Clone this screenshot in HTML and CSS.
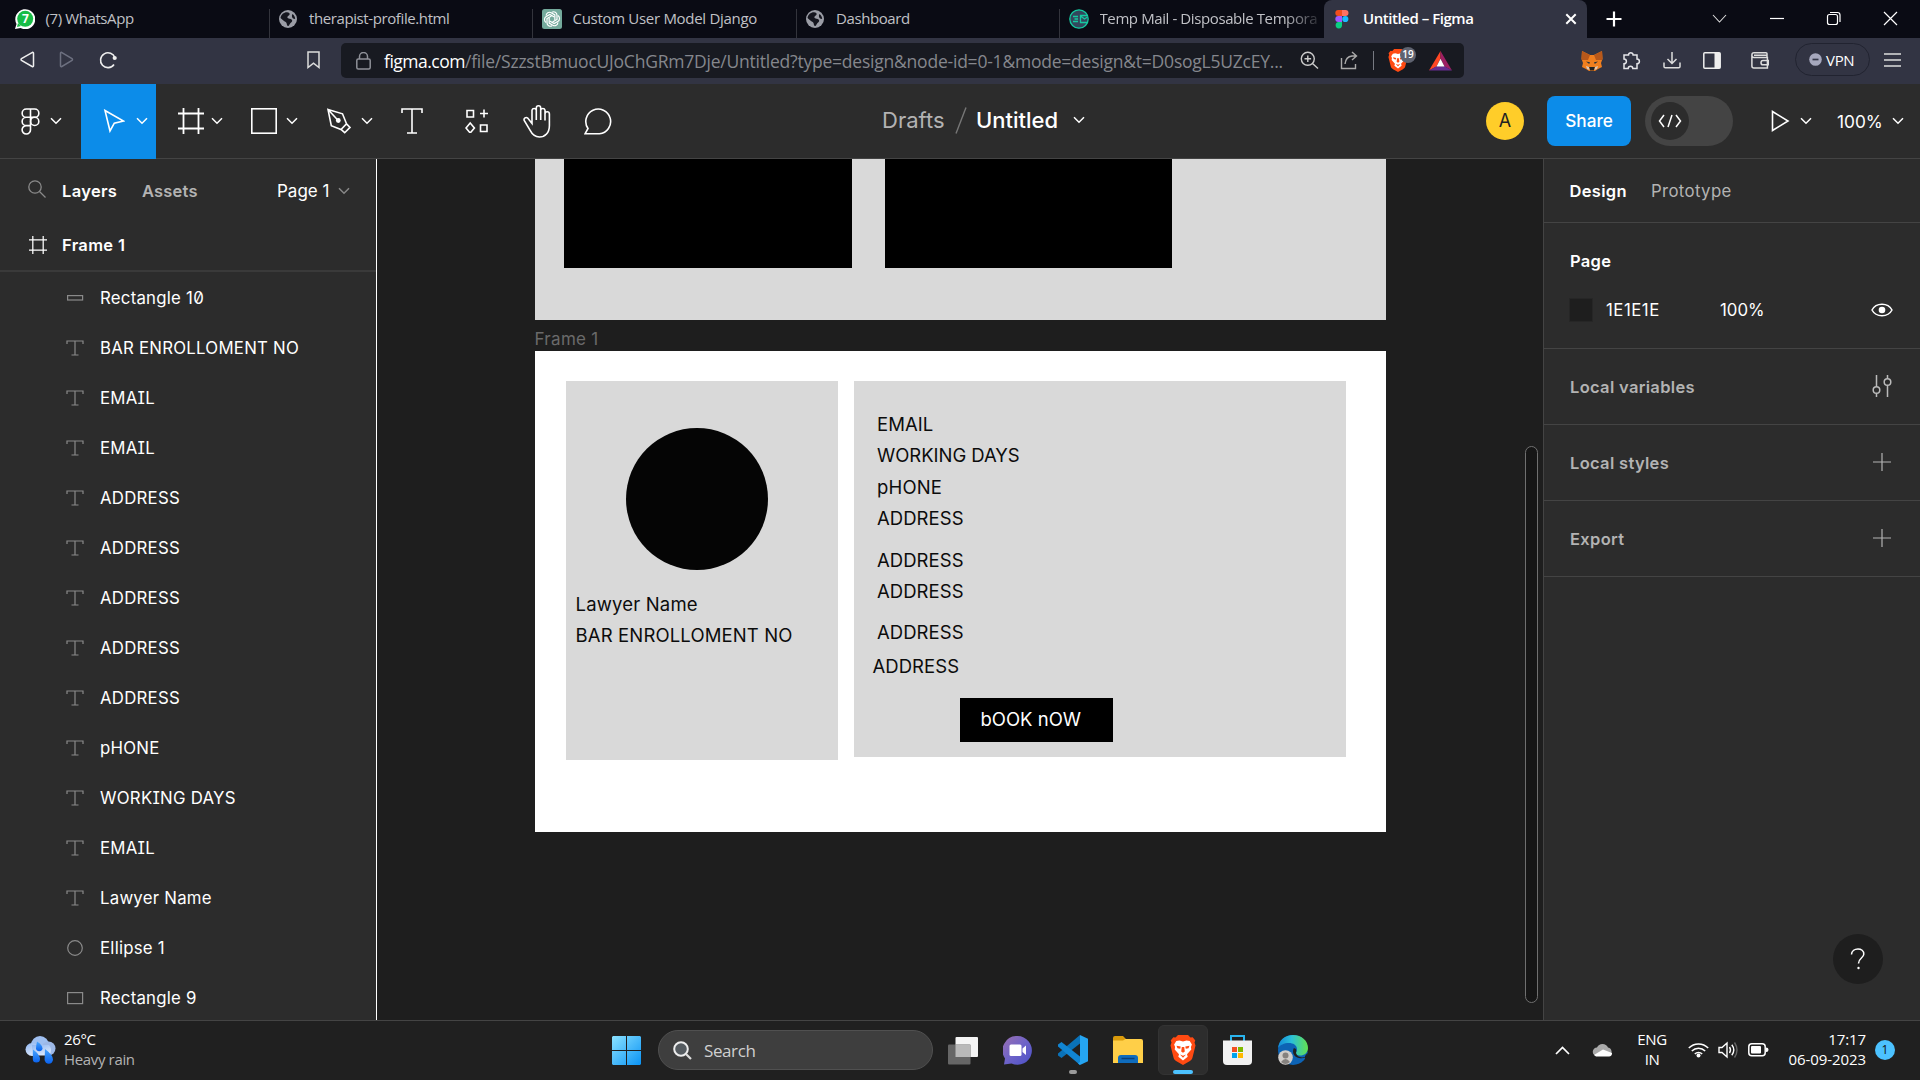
FILE: index.html
```html
<!DOCTYPE html>
<html lang="en">
<head>
<meta charset="utf-8">
<title>Untitled – Figma</title>
<link rel="stylesheet" href="styles.css">
</head>
<body>
<svg class="defs" width="0" height="0">
  <defs>
    <symbol id="chev" viewBox="0 0 12 8"><path d="M1 1.2l5 5 5-5" fill="none" stroke="currentColor" stroke-width="1.5"/></symbol>
    <symbol id="globe" viewBox="0 0 20 20"><circle cx="10" cy="10" r="9" fill="#9b9da6"/><path d="M9 3.2c2 .3 3 1 2.600 2.400-.5 1.400-2 1.200-2.200 2.600-.2 1.300 2.400 1.300 3.800 2 1.700.9 1 2.600-.4 3.600-1 .8-1.200 2.200-2.400 3.200-1.600.2-1.400-1.600-1.800-2.800-.5-1.300-2-1.600-3.200-2.600C4.200 10.500 3 9.600 2.500 8.700 3.100 5.600 5.800 3.100 9 3.200zM14.500 5c1.700 1.300 2.600 2.800 2.700 4.800-1.200.3-2.600-.3-3-1.500-.4-1.300-.4-2.300.3-3.300z" fill="#15161f"/></symbol>
    <symbol id="ty" viewBox="0 0 18 16"><path d="M1 4V1h16v3M9 1v14M5.500 15h7" fill="none" stroke="currentColor" stroke-width="1.200"/></symbol>
    <symbol id="frame" viewBox="0 0 26 26"><path d="M5.500 0v26M20.500 0v26M0 5.500h26M0 20.500h26" fill="none" stroke="currentColor" stroke-width="1.800"/></symbol>
    <symbol id="plus" viewBox="0 0 18 18"><path d="M9 0v18M0 9h18" stroke="currentColor" stroke-width="1.200"/></symbol>
    <symbol id="lion" viewBox="0 0 26 30"><path d="M8 0h10l2.500 2.600 2.200-.4 2.600 3.200-.8 2 1 3-3 12c-.5 1.800-1.400 2.800-3 3.900L13 30l-6.500-3.700c-1.600-1.100-2.500-2.100-3-3.900L.5 10.400l1-3-.8-2 2.600-3.200 2.200.4z" fill="#ff4a12"/><path d="M9.500 5.500l3.500.9 3.500-.9 3.200.6 2.200 3.500-1 2.300.4 2.600-4.300 4.800.7 2.500L13 25.500l-4.700-3.700.7-2.500-4.300-4.800.4-2.600-1-2.300 2.200-3.500z" fill="#fff"/><path d="M6.500 10.800l4.200.8-.5 2.200-2.700-.6zM19.500 10.800l-4.200.8.5 2.200 2.700-.6zM11.800 12h2.400l.6 4.500L13 17.800l-1.800-1.300zM10 19.400l3 1.300 3-1.300-3 3.300z" fill="#ff4a12"/></symbol>
  </defs>
</svg>

<header class="tabs">
  <div class="tab">
    <svg class="fav" viewBox="0 0 20 20"><path d="M0 20l1.500-5A10 10 0 1 1 5.500 19z" fill="#fff"/><circle cx="10.200" cy="9.800" r="8" fill="#18bd47"/><path d="M2 18l1-4 3 3z" fill="#18bd47"/><text x="10.200" y="14.200" text-anchor="middle" class="fav-num">7</text></svg>
    <span>(7) WhatsApp</span>
  </div>
  <div class="tab"><svg class="fav"><use href="#globe"/></svg><span>therapist-profile.html</span></div>
  <div class="tab">
    <svg class="fav" viewBox="0 0 20 20"><rect width="20" height="20" rx="2.500" fill="#74aa9c"/><g fill="none" stroke="#fff" stroke-width="1.200"><path id="petal" d="M10 3.200c2.200-1.200 5 .3 5 3v4.200l-4.500 2.600"/><use href="#petal" transform="rotate(60 10 10)"/><use href="#petal" transform="rotate(120 10 10)"/><use href="#petal" transform="rotate(180 10 10)"/><use href="#petal" transform="rotate(240 10 10)"/><use href="#petal" transform="rotate(300 10 10)"/></g></svg>
    <span>Custom User Model Django</span>
  </div>
  <div class="tab"><svg class="fav"><use href="#globe"/></svg><span>Dashboard</span></div>
  <div class="tab">
    <svg class="fav" viewBox="0 0 20 20"><circle cx="10" cy="10" r="9.200" fill="#33475c" stroke="#15c9a0" stroke-width="1.300"/><path d="M4 7.500h5M5.500 10H9M4 12.500h5M18 6.500h-6.500v7H18M11.500 7l4 3 3-2" fill="none" stroke="#15c9a0" stroke-width="1.300"/></svg>
    <span class="fade">Temp Mail - Disposable Tempora</span>
  </div>
  <div class="tab active">
    <svg class="fav" viewBox="0 0 20 20"><path d="M6.300 1H10v6H6.300a3 3 0 0 1 0-6z" fill="#f24e1e"/><path d="M10 1h3.500a3 3 0 0 1 0 6H10z" fill="#ff7262"/><path d="M10 7H6.300a3 3 0 0 0 0 6H10z" fill="#a259ff"/><circle cx="13.300" cy="10" r="3.100" fill="#1abcfe"/><path d="M6.600 13H10v3.500a3.200 3.200 0 1 1-3.400-3.500z" fill="#0acf83"/></svg>
    <span>Untitled – Figma</span>
    <svg class="tab-x" width="12" height="12" viewBox="0 0 12 12"><path d="M1.300 1.300l9.400 9.400M10.700 1.300l-9.400 9.400" stroke="#fff" stroke-width="2"/></svg>
  </div>
  <svg class="newtab" width="16" height="16"><path d="M8 0.500v15M.5 8h15" stroke="#fff" stroke-width="2.200"/></svg>
  <div class="win">
    <svg width="57" height="37"><path d="M22 15l6.500 7 6.500-7" fill="none" stroke="#ddd" stroke-width="1.100"/></svg>
    <svg width="57" height="37"><path d="M22 18.500h14" stroke="#fff" stroke-width="1.200"/></svg>
    <svg width="57" height="37"><rect x="22.500" y="14.500" width="10" height="10" rx="2" fill="none" stroke="#fff" stroke-width="1.200"/><path d="M25 12.500h7.500a2.500 2.500 0 0 1 2.500 2.500v7" fill="none" stroke="#fff" stroke-width="1.200"/></svg>
    <svg width="57" height="37"><path d="M22 12l13 13M35 12L22 25" stroke="#fff" stroke-width="1.200"/></svg>
  </div>
</header>

<nav class="address">
  <svg width="15" height="17"><path d="M12.500 1.300L1.500 7.600q-1 .9 0 1.800l11 6.300q1 .2 1-1V2.300q0-1.200-1-1z" fill="none" stroke="#eee" stroke-width="1.500"/></svg>
  <svg class="fwd" width="15" height="17"><path d="M2.500 1.300l10.500 6.300q1 .9 0 1.800L2.500 15.700q-1 .2-1-1V2.300q0-1.200 1-1z" fill="none" stroke="#6d7080" stroke-width="1.500"/></svg>
  <svg class="reload" width="19" height="18"><path d="M15 13.500A7.400 7.400 0 1 1 16 7" fill="none" stroke="#eee" stroke-width="1.600"/><circle cx="15.700" cy="7" r="2.100" fill="#eee"/></svg>
  <svg class="mark" width="13" height="18"><path d="M1 1h11v15.500l-5.500-4.300L1 16.500z" fill="none" stroke="#ddd" stroke-width="1.500"/></svg>
  <div class="urlbox">
    <svg width="15" height="18"><rect x=".8" y="7" width="13.400" height="10" rx="1.500" fill="none" stroke="#8e9098" stroke-width="1.500"/><path d="M3.500 7V4.500a4 4 0 0 1 8 0V7" fill="none" stroke="#8e9098" stroke-width="1.500"/></svg>
    <span class="url"><b>figma.com</b>/file/SzzstBmuocUJoChGRm7Dje/Untitled?type=design&amp;node-id=0-1&amp;mode=design&amp;t=D0sogL5UZcEY...</span>
    <svg class="zoomi" width="19" height="19"><g fill="none" stroke="#ccc" stroke-width="1.400"><circle cx="7.800" cy="7.800" r="6.500"/><path d="M12.500 12.500l5.500 5M7.800 4.500v6.600M4.500 7.800h6.600"/></g></svg>
    <svg class="sharei" width="19" height="19"><path d="M1.500 7v10.500h14V13M5 13c.5-5 3-7.500 7-8h4M12 1l4.500 4L12 9" fill="none" stroke="#aaa" stroke-width="1.400"/></svg>
    <i class="vsep"></i>
    <span class="brave"><svg width="20" height="23"><use href="#lion"/></svg><em>19</em></span>
    <svg class="bat" width="23" height="20"><path d="M11.500 0L0 19.500l7.500-4 4-8z" fill="#ff4724"/><path d="M11.500 0L23 19.500l-7.500-4-4-8z" fill="#9e1f63"/><path d="M0 19.500h23l-7.500-4.200h-8z" fill="#662d91"/><path d="M11.500 7.800l4 7.700h-8z" fill="#fff"/></svg>
  </div>
  <div class="ext">
    <svg class="e1" width="22" height="20"><path d="M1 0l8 4h4l8-4 .5 8-1.500 4 1 4-4 2-3 2h-6l-3-2-4-2 1-4L.5 8z" fill="#f07f1f"/><path d="M1 0l8 4-2 5-6 0-.5-1zM21 0l-8 4 2 5 6 0 .5-1z" fill="#b8581a"/><path d="M5 10.500l4 .8-.8 1.600zM17 10.500l-4 .8.8 1.600z" fill="#25333e"/><path d="M8 16h6l-1 3.500H9z" fill="#222"/><path d="M5 15l3 1 .6 3L6 18zM17 15l-3 1-.6 3L16 18z" fill="#ddc8b8"/></svg>
    <svg class="e2" width="20" height="19"><path d="M2 4h4.500a2.300 2.300 0 1 1 4.600 0H15v4a2.400 2.400 0 1 1 0 4.800V17.500h-4.200a2.300 2.300 0 0 0-4.600 0H2v-4.700a2.400 2.400 0 0 0 0-4.800z" fill="none" stroke="#e4e4e8" stroke-width="1.500"/></svg>
    <svg class="e3" width="18" height="17"><path d="M9 0v11M4.500 7L9 11.500 13.500 7M1 10.500v4q0 1.300 1.300 1.300h13.400q1.300 0 1.300-1.300v-4" fill="none" stroke="#ddd" stroke-width="1.500"/></svg>
    <svg class="e4" width="18" height="17"><rect x=".8" y=".8" width="16.400" height="15.400" rx="1" fill="none" stroke="#eee" stroke-width="1.500"/><path d="M11.500 1h5.500v15h-5.500z" fill="#eee"/></svg>
    <svg class="e5" width="18" height="17"><path d="M16 5.500V1.800q0-1-1-1H3Q.9.800.9 3v11q0 2 2 2h13.500V5.500H3Q1 5.400 1 3.500M17.500 8.500h-5.500q-2 0-2 2.200 0 2.100 2 2.100h5.500zM3 3.200h13" fill="none" stroke="#ddd" stroke-width="1.500"/></svg>
  </div>
  <div class="vpn"><svg width="13" height="13"><circle cx="6.500" cy="6.500" r="6.300" fill="#a6a8bd"/><path d="M3.500 6.500h6" stroke="#353848" stroke-width="1.700"/></svg><span>VPN</span></div>
  <svg class="burger" width="17" height="14"><path d="M0 1h17M0 7h17M0 13h17" stroke="#ddd" stroke-width="1.500"/></svg>
</nav>

<div class="toolbar">
  <div class="tool menu">
    <svg width="19" height="27" viewBox="0 0 19 27"><g fill="none" stroke="#fff" stroke-width="1.600"><path d="M9.500 1H5.300a4.100 4.100 0 0 0 0 8.300h4.200zM9.500 1h4.200a4.100 4.100 0 0 1 0 8.300H9.500zM9.500 9.300H5.300a4.100 4.100 0 0 0 0 8.300h4.200zM9.500 17.600v4.100a4.200 4.200 0 1 1-4.200-4.100z"/><circle cx="13.700" cy="13.400" r="4.100"/></g></svg>
    <svg class="cv"><use href="#chev"/></svg>
  </div>
  <div class="tool on"><svg width="22" height="24" viewBox="0 0 22 24"><path d="M2 1.500l18.500 10.500-9.200 2.200L7 22z" fill="none" stroke="#fff" stroke-width="1.600"/></svg><svg class="cv"><use href="#chev"/></svg></div>
  <div class="tool"><svg width="26" height="26"><use href="#frame"/></svg><svg class="cv"><use href="#chev"/></svg></div>
  <div class="tool rect"><svg width="26" height="26"><rect x=".8" y=".8" width="24.400" height="24.400" fill="none" stroke="#fff" stroke-width="1.600"/></svg><svg class="cv"><use href="#chev"/></svg></div>
  <div class="tool rect"><svg width="26" height="26" viewBox="0 0 26 26"><g fill="none" stroke="#fff" stroke-width="1.600"><path d="M2 1.500l14.500 4.300 4 10-5.500 5.700-9.700-3.800zM2 1.500l9.500 10.200M20.300 15.600l3.700 3.800-5.300 5.300-3.700-3.400"/></g><circle cx="12.300" cy="12.500" r="2.400" fill="#fff"/></svg><svg class="cv"><use href="#chev"/></svg></div>
  <div class="tool solo a"><svg width="22" height="26" viewBox="0 0 22 26"><path d="M1 5V1h20v4M11 1v24M6 25h10" fill="none" stroke="#fff" stroke-width="1.600"/></svg></div>
  <div class="tool solo b"><svg width="24" height="24" viewBox="0 0 24 24"><path d="M2 1.500h6.500V8H2zM15.500 16H22v6.500h-6.500zM19 .5v8M15 4.500h8M5.200 14l4.200 5-4.200 5-4.200-5z" fill="none" stroke="#fff" stroke-width="1.600"/></svg></div>
  <div class="tool solo c"><svg width="28" height="33" viewBox="0 0 28 33"><path d="M9 15V5.200a2.200 2.200 0 0 1 4.300 0V3a2.200 2.200 0 0 1 4.400 0v2.200a2.200 2.200 0 0 1 4.300 0V9a2.200 2.200 0 0 1 4.400 0v11.500C26.400 28 22 32 16.500 32c-5 0-7.300-2.500-9.500-6.800L1.200 15.500a2.200 2.200 0 0 1 3.500-2.400L9 18.500V13M13.300 4v11M17.700 4v11M22 5v10.500" fill="none" stroke="#fff" stroke-width="1.600"/></svg></div>
  <div class="tool solo d"><svg width="29" height="27" viewBox="0 0 29 27"><path d="M1 25.800l3-5.300A12.400 12.400 0 1 1 15.500 25.800z" fill="none" stroke="#fff" stroke-width="1.600"/></svg></div>
  <div class="title"><span class="drafts">Drafts</span><svg width="12" height="27"><path d="M11 .5L1 26.500" stroke="#777" stroke-width="1.400"/></svg><span class="untitled">Untitled</span><svg class="cv"><use href="#chev"/></svg></div>
  <div class="right">
    <div class="avatar">A</div>
    <div class="share">Share</div>
    <div class="toggle"><div class="knob"><svg width="24" height="14" viewBox="0 0 24 14"><path d="M6 1L1.500 7 6 13M18 1l4.500 6L18 13M14 1l-4 12" fill="none" stroke="#fff" stroke-width="1.500"/></svg></div></div>
    <svg class="play" width="19" height="22"><path d="M1.500 1.500v19L17 11z" fill="none" stroke="#fff" stroke-width="1.600"/></svg>
    <svg class="cv"><use href="#chev"/></svg>
    <span class="pct">100%</span>
    <svg class="cv"><use href="#chev"/></svg>
  </div>
</div>

<main class="work">
  <aside class="left">
    <div class="lhead">
      <svg width="18" height="18"><circle cx="7" cy="7" r="6.200" fill="none" stroke="#8a8a8a" stroke-width="1.300"/><path d="M11.500 11.500l6 6" stroke="#8a8a8a" stroke-width="1.300"/></svg>
      <b>Layers</b><b class="dim">Assets</b><span class="page">Page 1</span><svg class="cv"><use href="#chev"/></svg>
    </div>
    <div class="lframe"><svg width="18" height="18"><use href="#frame"/></svg><b>Frame 1</b></div>
    <ul class="layers">
      <li><svg width="18" height="16"><rect x="1.600" y="5.600" width="15" height="4.400" fill="none" stroke="#8a8a8a" stroke-width="1.200"/></svg>Rectangle 10</li>
      <li><svg width="18" height="16"><use href="#ty"/></svg>BAR ENROLLOMENT NO</li>
      <li><svg width="18" height="16"><use href="#ty"/></svg>EMAIL</li>
      <li><svg width="18" height="16"><use href="#ty"/></svg>EMAIL</li>
      <li><svg width="18" height="16"><use href="#ty"/></svg>ADDRESS</li>
      <li><svg width="18" height="16"><use href="#ty"/></svg>ADDRESS</li>
      <li><svg width="18" height="16"><use href="#ty"/></svg>ADDRESS</li>
      <li><svg width="18" height="16"><use href="#ty"/></svg>ADDRESS</li>
      <li><svg width="18" height="16"><use href="#ty"/></svg>ADDRESS</li>
      <li><svg width="18" height="16"><use href="#ty"/></svg>pHONE</li>
      <li><svg width="18" height="16"><use href="#ty"/></svg>WORKING DAYS</li>
      <li><svg width="18" height="16"><use href="#ty"/></svg>EMAIL</li>
      <li><svg width="18" height="16"><use href="#ty"/></svg>Lawyer Name</li>
      <li><svg width="18" height="16"><circle cx="9" cy="8" r="7.300" fill="none" stroke="#8a8a8a" stroke-width="1.200"/></svg>Ellipse 1</li>
      <li><svg width="18" height="16"><rect x="1.600" y="2.600" width="15" height="11" fill="none" stroke="#8a8a8a" stroke-width="1.200"/></svg>Rectangle 9</li>
    </ul>
  </aside>

  <section class="canvas">
    <div class="node top-frame"></div>
    <div class="node black b1"></div>
    <div class="node black b2"></div>
    <div class="node label">Frame 1</div>
    <div class="node frame1"></div>
    <div class="node card1"></div>
    <div class="node card2"></div>
    <div class="node disc"></div>
    <div class="node txt name">Lawyer Name</div>
    <div class="node txt bar">BAR ENROLLOMENT NO</div>
    <div class="node txt r1">EMAIL</div>
    <div class="node txt r2">WORKING DAYS</div>
    <div class="node txt r3">pHONE</div>
    <div class="node txt r4">ADDRESS</div>
    <div class="node txt r5">ADDRESS</div>
    <div class="node txt r6">ADDRESS</div>
    <div class="node txt r7">ADDRESS</div>
    <div class="node txt r8">ADDRESS</div>
    <div class="node book">bOOK nOW</div>
    <div class="node scroll"></div>
  </section>

  <aside class="props">
    <div class="ptabs"><b>Design</b><span>Prototype</span></div>
    <div class="ppage">
      <b>Page</b>
      <div class="fill"><i></i><span class="hex">1E1E1E</span><span>100%</span>
        <svg width="22" height="14"><path d="M1 7C5-.6 17-.6 21 7 17 14.600 5 14.600 1 7z" fill="none" stroke="#fff" stroke-width="1.500"/><circle cx="11" cy="7" r="3.300" fill="#fff"/></svg></div>
    </div>
    <div class="sec"><b>Local variables</b><svg width="20" height="22"><g fill="none" stroke="#bbb" stroke-width="1.500"><circle cx="4.500" cy="15" r="3.300"/><circle cx="15.500" cy="7" r="3.300"/><path d="M4.500 0v11.700M4.500 18.300V22M15.500 0v3.700M15.500 10.300V22"/></g></svg></div>
    <div class="sec"><b>Local styles</b><svg class="pl" width="18" height="18"><use href="#plus"/></svg></div>
    <div class="sec"><b>Export</b><svg class="pl" width="18" height="18"><use href="#plus"/></svg></div>
    <div class="help"><svg width="16" height="22"><path d="M1.500 6.500C1.800-1 14.300-.8 13.800 6.200 13.500 10.200 8.500 10 8.500 15.500" fill="none" stroke="#fff" stroke-width="1.500"/><circle cx="8.500" cy="20" r="1.200" fill="#fff"/></svg></div>
  </aside>
</main>

<footer class="taskbar">
  <svg class="wx" width="31" height="28" viewBox="0 0 31 28"><defs><linearGradient id="cl" x2=".5" y2="1"><stop stop-color="#8fb6f2"/><stop offset="1" stop-color="#dbe8fb"/></linearGradient><linearGradient id="dr" x2="0" y2="1"><stop stop-color="#48a6ff"/><stop offset="1" stop-color="#0a62ee"/></linearGradient></defs><circle cx="15" cy="9" r="9" fill="#9fbff0"/><circle cx="23.500" cy="12.500" r="7" fill="#9db8e6"/><circle cx="7" cy="13.500" r="6.500" fill="url(#cl)"/><path d="M7 9h17q4 5 0 10.500H7z" fill="url(#cl)"/><g fill="url(#dr)"><path d="M12 5.500q5.500 3.500 5.500 7a3.300 3.300 0 0 1-6.500 0q0-2 1-7z"/><path d="M8 13.500q7 5 7 9.500a3.600 3.600 0 0 1-7.200 0z"/><path d="M20 13q8 6 8 10.500a4.200 4.200 0 0 1-8.400 0z"/></g></svg>
  <div class="weather"><span>26°C</span><span class="dim">Heavy rain</span></div>
  <svg class="start" width="29" height="29"><defs><linearGradient id="wn" x2="1" y2="1"><stop stop-color="#8be2ff"/><stop offset="1" stop-color="#0a93f5"/></linearGradient></defs><path d="M1 0h13v14H0V1zM15 0h13l1 1v13H15zM0 15h14v14H1l-1-1zM15 15h14v13l-1 1H15z" fill="url(#wn)"/></svg>
  <div class="search"><svg width="19" height="19"><circle cx="8" cy="8" r="6.800" fill="#555b60" stroke="#eee" stroke-width="2"/><path d="M13 13l5 5" stroke="#ddd" stroke-width="2.200"/></svg><span>Search</span></div>
  <svg class="tv" width="30" height="29"><rect x="7.500" y="1" width="22.500" height="20" rx="1" fill="#f4f4f4"/><rect x="0" y="8.500" width="22.500" height="20" rx="1" fill="#666"/><path d="M7.500 8.500h15V21h-15z" fill="#b9b9b9"/></svg>
  <svg class="chat" width="29" height="29"><defs><linearGradient id="tm" x2="1" y2="1"><stop stop-color="#9a6fb0"/><stop offset=".5" stop-color="#6e63c8"/><stop offset="1" stop-color="#4a50c8"/></linearGradient></defs><path d="M14.500 0a14.400 14.400 0 1 1-6 27.500L1 28.500l1-6A14.400 14.400 0 0 1 14.500 0z" fill="url(#tm)"/><rect x="6.500" y="8.500" width="12" height="11.500" rx="1.500" fill="#fff"/><path d="M19.500 12.500l3.500-3v9.500l-3.500-3z" fill="#fff"/></svg>
  <div class="app code"><svg width="30" height="30" viewBox="0 0 30 30"><path d="M22 0v8.500L3.500 23 0 20.500v-2z" fill="#0a72b8"/><path d="M3.500 7L0 9.500v2L22 30v-8.500z" fill="#1185d2"/><path d="M22 0l8 3.800v22.400L22 30l-2-1.500 2-1.500z" fill="#25a5f2"/></svg><i></i></div>
  <svg class="folder" width="30" height="28"><path d="M0 2q0-2 2-2h8l3 3h6v6H0z" fill="#d99a0b"/><path d="M0 4.500l10 0 2.500-1.500H28q2 0 2 2v22H0z" fill="#ffcf48"/><path d="M5 27v-5q0-3 3-3h14q3 0 3 3v5z" fill="#0f6cbd"/><path d="M8.500 22.500h13" stroke="#0a3f78" stroke-width="1.500"/></svg>
  <div class="app tile"><svg width="26" height="30"><use href="#lion"/></svg><i></i></div>
  <svg class="store" width="29" height="30"><path d="M8 6V1h13v5" fill="none" stroke="#29b4ee" stroke-width="2"/><path d="M0 5.500h29V26q0 4-4 4H4q-4 0-4-4z" fill="#f1f1f1"/><path d="M9 12h5v5H9z" fill="#f25022"/><path d="M15 12h5v5h-5z" fill="#7fba00"/><path d="M9 18h5v5H9z" fill="#00a4ef"/><path d="M15 18h5v5h-5z" fill="#ffb900"/></svg>
  <svg class="edge" width="30" height="30"><defs><linearGradient id="eg" x2="1"><stop stop-color="#1389d8"/><stop offset=".45" stop-color="#2bc0d8"/><stop offset="1" stop-color="#63e04e"/></linearGradient></defs><circle cx="15" cy="15" r="15" fill="#0d63b5"/><path d="M27 21q6-6 2-9l1 10-3 3z" fill="#202020"/><path d="M0 13C1 5 7 0 15 0c9 0 15 6 15 13 0 5-4 7.500-8 7.500-3 0-4.500-1-4.500-2.200 0-.8 1.500-1.500 1.500-4C19 10 15 8 11 8 6 8 2 10 0 13z" fill="url(#eg)"/><path d="M18 18c1 4 6 6 11 3-2 2-4 2.500-8 2C16 22 14 18 15.500 13.500 18 12.500 19 15 18 18z" fill="#202020"/><circle cx="7.500" cy="22.500" r="7.300" fill="#d0cdca"/><circle cx="7.500" cy="20.500" r="3" fill="#85817e"/><path d="M3 27q4.500-6 9 0-4.500 4-9 0z" fill="#85817e"/></svg>
  <div class="tray">
    <svg class="up" width="15" height="9"><path d="M1 8l6.500-6.500L14 8" fill="none" stroke="#fff" stroke-width="1.700"/></svg>
    <svg class="cloud" width="21" height="14"><path d="M5 13a4 4 0 0 1 0-8.500A6 6 0 0 1 16 4.500 4.500 4.500 0 0 1 17 13z" fill="#aaa"/><path d="M2 12l9-5.500 9 3.500a3 3 0 0 1-3 3.500H4z" fill="#fff"/></svg>
    <div class="lang"><span>ENG</span><span>IN</span></div>
    <svg class="wifi" width="21" height="16"><g fill="none" stroke="#fff" stroke-width="1.500"><path d="M.8 6a13.500 13.500 0 0 1 19.400 0M3.800 9a9.500 9.500 0 0 1 13.400 0M6.800 12a5.200 5.200 0 0 1 7.400 0"/></g><circle cx="10.500" cy="13.500" r="2" fill="#fff"/></svg>
    <svg class="vol" width="21" height="18"><path d="M1 6.500h3l5-4.500v14l-5-4.500H1z" fill="none" stroke="#fff" stroke-width="1.400"/><path d="M11.500 6q2 3 0 6M13.800 3.800q4 5.200 0 10.400" fill="none" stroke="#fff" stroke-width="1.400"/><path d="M16.500 1.500q5 7.500 0 15" fill="none" stroke="#666" stroke-width="1.400"/></svg>
    <svg class="batt" width="21" height="14"><rect x=".8" y=".8" width="16.400" height="12" rx="3" fill="none" stroke="#fff" stroke-width="1.500"/><rect x="3" y="3" width="10" height="7.600" rx="1" fill="#fff"/><path d="M18 4.500q2.500 0 2.500 2.300T18 9z" fill="#fff"/></svg>
    <div class="clock"><span>17:17</span><span>06-09-2023</span></div>
    <div class="badge">1</div>
  </div>
</footer>
</body>
</html>
```
FILE: styles.css
```css
* { box-sizing: border-box; }
body {
  margin: 0; width: 1920px; height: 1080px; overflow: hidden;
  display: flex; flex-direction: column; background: #1e1e1e; color: #fff;
  font-family: Inter, "Liberation Sans", sans-serif; font-size: 16.5px; white-space: nowrap;
}
svg { display: block; flex: none; }
.defs { position: absolute; }
b { font-weight: 600; letter-spacing: .32px; }
.cv { width: 12px; height: 8px; }

/* browser tabs */
.tabs, .address, .taskbar { font-family: "Open Sans", "Noto Sans", sans-serif; }
.tabs { height: 38px; flex: none; background: #0a0b14; display: flex; padding-left: 6px; font-size: 15px; color: #c0c1c6; letter-spacing: -.4px; }
.tab { width: 263.5px; flex: none; display: flex; align-items: center; padding-left: 8.500px; position: relative; line-height: 36px; }
.tab span { height: 38px; }
.tab::after { content: ""; position: absolute; right: 0; top: 9px; bottom: 0; width: 1px; background: #33343c; }
.tab:nth-child(5)::after { display: none; }
.fav { width: 20px; height: 20px; margin-right: 11px; }
.fav-num { font: 700 12px "Open Sans", sans-serif; fill: #fff; }
.tab.active { background: #323443; border-radius: 8px 8px 0 0; color: #fff; font-weight: 600; letter-spacing: -.45px; }
.tab.active::after { display: none; }
.tab:nth-child(3) { letter-spacing: -.3px; }
.fade { -webkit-mask-image: linear-gradient(90deg, #000 85%, #0003); mask-image: linear-gradient(90deg, #000 85%, #0003); }
.tab-x { margin-left: auto; margin-right: 10px; }
.newtab { margin: 11px 0 0 19px; }
.win { display: flex; margin-left: auto; margin-right: 1px; }

/* address row */
.address { height: 46px; flex: none; background: #323443; display: flex; align-items: center; padding: 0 0 1px 19.500px; }
.address > svg { position: relative; top: -1px; }
.fwd { margin-left: 24px; }
.reload { margin-left: 25px; }
.mark { margin-left: 189.500px; }
.urlbox { width: 1123px; height: 35px; margin-left: 21px; background: #181a21; border-radius: 5px; display: flex; align-items: center; padding-left: 15px; }
.url { width: 916px; margin-left: 13px; font-size: 17.5px; line-height: 34px; color: #85878d; letter-spacing: -.22px; }
.url b { color: #fff; font-weight: 400; letter-spacing: -.5px; }
.sharei { margin-left: 21px; }
.vsep { width: 1px; height: 19px; background: #777a82; margin-left: 14px; }
.brave { margin-left: 14px; position: relative; }
.brave svg { width: 20px; height: 23px; }
.brave em { position: absolute; left: 12px; top: -2px; width: 16px; height: 16px; border-radius: 8px; background: #5f6370; font: 600 10px/15px "Open Sans", sans-serif; text-align: center; }
.bat { margin-left: 21px; }
.ext { display: flex; align-items: center; margin-left: 117px; }
.e2 { margin-left: 19px; }
.e3 { margin-left: 21px; }
.e4 { margin-left: 22px; }
.e5 { margin-left: 30px; }
.vpn { width: 75px; height: 33px; margin-left: 26px; border: 1px solid #212330; border-radius: 17px; display: flex; align-items: center; padding-left: 13px; font-size: 15px; letter-spacing: -.3px; position: relative; top: -1px; }
.vpn span { margin-left: 4px; }
.burger { margin-left: 14px; }

/* editor toolbar */
.toolbar { height: 75px; flex: none; background: #2c2c2c; border-bottom: 1px solid #444; display: flex; align-items: center; }
.tool { width: 75px; height: 75px; display: flex; align-items: center; justify-content: space-between; padding: 0 8px 0 22px; flex: none; }
.tool.rect { padding-left: 20px; }
.tool.menu { width: 81px; padding: 0 19px 0 21px; }
.tool.on { background: #0c8ce9; }
.tool.solo { justify-content: center; padding: 0; width: 62px; }
.tool.a { width: 61px; }
.tool.b { width: 69px; }
.tool.c { width: 52px; }
.tool.d { width: 71px; }
.title { display: flex; align-items: center; margin-left: 248px; font-size: 22px; position: relative; top: -1px; }
.drafts { color: #b3b3b3; width: 73px; }
.untitled { margin-left: 9px; width: 97px; font-weight: 500; }
.right { display: flex; align-items: center; margin-left: auto; padding-right: 16px; }
.avatar { width: 38px; height: 38px; border-radius: 50%; background: #ffcd29; color: #222; text-align: center; line-height: 38px; font-size: 18px; }
.share { width: 84px; height: 50px; margin-left: 23px; border-radius: 8px; background: #0c8ce9; text-align: center; line-height: 49px; font-weight: 500; font-size: 17.200px; }
.toggle { width: 88px; height: 50px; margin-left: 14px; border-radius: 25px; background: #444; padding: 6px; }
.knob { width: 38px; height: 38px; border-radius: 50%; background: #2c2c2c; display: flex; align-items: center; justify-content: center; }
.play { margin-left: 38px; }
.play + .cv { margin-left: 10px; }
.pct { margin-left: 25px; width: 55px; font-size: 17.300px; }

/* layers */
.work { height: 861px; flex: none; display: flex; overflow: hidden; }
.left { width: 377px; background: #2c2c2c; border-right: 1px solid #fff; flex: none; }
.lhead { height: 61px; display: flex; align-items: center; padding: 3px 0 0 28px; }
.lhead svg:first-child { position: relative; top: -2px; }
.lhead b { margin-left: 16px; width: 80px; }
.lhead .dim { margin-left: 0; width: 135px; letter-spacing: .2px; }
.dim { color: #b3b3b3; }
.page { width: 61px; font-size: 17px; }
.lhead .cv { color: #888; }
.lframe { height: 52px; border-bottom: 2px solid #3a3a3a; display: flex; align-items: center; padding-left: 28.500px; }
.lframe b { margin-left: 15.500px; }
.layers { list-style: none; margin: 1px 0 0; padding: 0; font-feature-settings: "cv08", "zero"; }
.layers li { height: 50px; display: flex; align-items: center; padding-left: 66px; font-size: 16.800px; letter-spacing: .24px; }
.layers svg { margin-right: 16px; color: #8a8a8a; position: relative; top: -.5px; }

/* canvas: coordinates are relative to its own corner */
.canvas { flex: 1; position: relative; background: #1e1e1e; overflow: hidden; }
.node { position: absolute; }
.top-frame { left: 158px; top: 0; width: 851px; height: 161px; background: #d9d9d9; }
.black { top: 0; height: 109px; background: #000; }
.b1 { left: 187px; width: 288px; }
.b2 { left: 507.500px; width: 287.500px; }
.label { left: 157.500px; top: 169.500px; font-size: 17px; line-height: 20px; color: #6a6a6a; letter-spacing: .3px; }
.frame1 { left: 158px; top: 192px; width: 851px; height: 481px; background: #fff; }
.card1 { left: 189px; top: 222px; width: 272px; height: 379px; background: #d9d9d9; }
.card2 { left: 476.500px; top: 222px; width: 492px; height: 376px; background: #d9d9d9; }
.disc { left: 248.500px; top: 268.500px; width: 142px; height: 142px; border-radius: 50%; background: #050505; }
.txt { left: 500px; color: #0c0c0c; font-size: 18.500px; line-height: 22px; letter-spacing: .05px; }
.name { left: 198.500px; top: 433.500px; letter-spacing: .18px; }
.bar { left: 198.500px; top: 465px; letter-spacing: .14px; }
.r1 { top: 254px; }
.r2 { top: 285px; letter-spacing: -.04px; }
.r3 { top: 316.500px; letter-spacing: .15px; }
.r4 { top: 348px; }
.r5 { top: 390px; }
.r6 { top: 421px; }
.r7 { top: 462px; }
.r8 { top: 496px; left: 495.500px; }
.book { left: 583px; top: 539px; width: 153px; height: 44px; background: #000; padding-left: 20.500px; line-height: 43px; font-size: 18.500px; }
.scroll { left: 1148px; top: 287px; width: 13px; height: 557px; border: 1.500px solid #707070; border-radius: 7px; background: #161616; }

/* properties */
.props { width: 377px; flex: none; background: #2c2c2c; border-left: 1px solid #444; position: relative; }
.ptabs { height: 64px; border-bottom: 1px solid #444; display: flex; align-items: center; padding: 1px 0 0 25.500px; }
.ptabs b { width: 81.500px; }
.ptabs span { color: #b3b3b3; font-size: 16.800px; letter-spacing: .35px; }
.ppage { height: 126px; border-bottom: 1px solid #444; padding: 28px 27px 0 25px; }
.ppage b { display: block; line-height: 20px; padding-left: 1px; }
.fill { display: flex; align-items: center; margin-top: 27px; height: 24px; font-size: 16.800px; }
.fill i { width: 24px; height: 24px; background: #1e1e1e; border: 1px solid #262626; }
.fill .hex { margin-left: 13px; width: 114px; letter-spacing: .5px; }
.fill svg { margin-left: auto; }
.sec { height: 76px; border-bottom: 1px solid #444; display: flex; align-items: center; justify-content: space-between; padding: 0 28px 0 26px; color: #b3b3b3; }
.sec svg { position: relative; top: -1px; }
.pl { margin-right: 1.500px; }
.help { position: absolute; right: 37px; top: 775px; width: 50px; height: 50px; border-radius: 50%; background: #1e1e1e; display: flex; align-items: center; justify-content: center; }

/* taskbar */
.taskbar { height: 60px; flex: none; background: #202020; border-top: 1px solid #444; display: flex; align-items: center; font-size: 15px; padding: 0 0 1px 25px; }
.weather, .lang, .clock { display: flex; flex-direction: column; line-height: 20px; padding-bottom: 2px; }
.weather { margin-left: 8px; width: 548px; letter-spacing: -.35px; }
.search { width: 275px; height: 40px; margin-left: 17px; border-radius: 20px; background: #3e3e3e; border: 1px solid #505050; display: flex; align-items: center; padding-left: 14px; font-size: 17px; color: #d0d0d0; }
.search span { margin-left: 12px; letter-spacing: -.4px; }
.tv { margin-left: 15px; }
.chat { margin-left: 25px; }
.app { position: relative; display: flex; align-items: center; justify-content: center; width: 30px; height: 50px; }
.app i { position: absolute; bottom: 1px; height: 4px; border-radius: 2px; }
.code { margin-left: 26px; }
.code i { width: 8px; background: #9a9a9a; left: 11px; }
.folder { margin-left: 25px; }
.tile { width: 50px; margin-left: 15px; background: #2d2d2d; border: 1px solid #333; border-radius: 6px; }
.tile i { width: 20px; background: #4cc2ff; bottom: 0; }
.store { margin-left: 15px; }
.edge { margin-left: 26px; }
.tray { margin-left: auto; margin-right: 25px; display: flex; align-items: center; }
.cloud { margin-left: 22px; }
.lang { margin-left: 20px; width: 38px; text-align: center; letter-spacing: -.4px; }
.wifi { margin-left: 17px; }
.vol { margin-left: 9px; }
.batt { margin-left: 9px; }
.clock { width: 97px; text-align: right; letter-spacing: -.08px; }
.badge { margin-left: 9px; width: 20px; height: 20px; border-radius: 50%; background: #4cc2ff; color: #111; font-size: 12px; line-height: 20px; text-align: center; }
```
